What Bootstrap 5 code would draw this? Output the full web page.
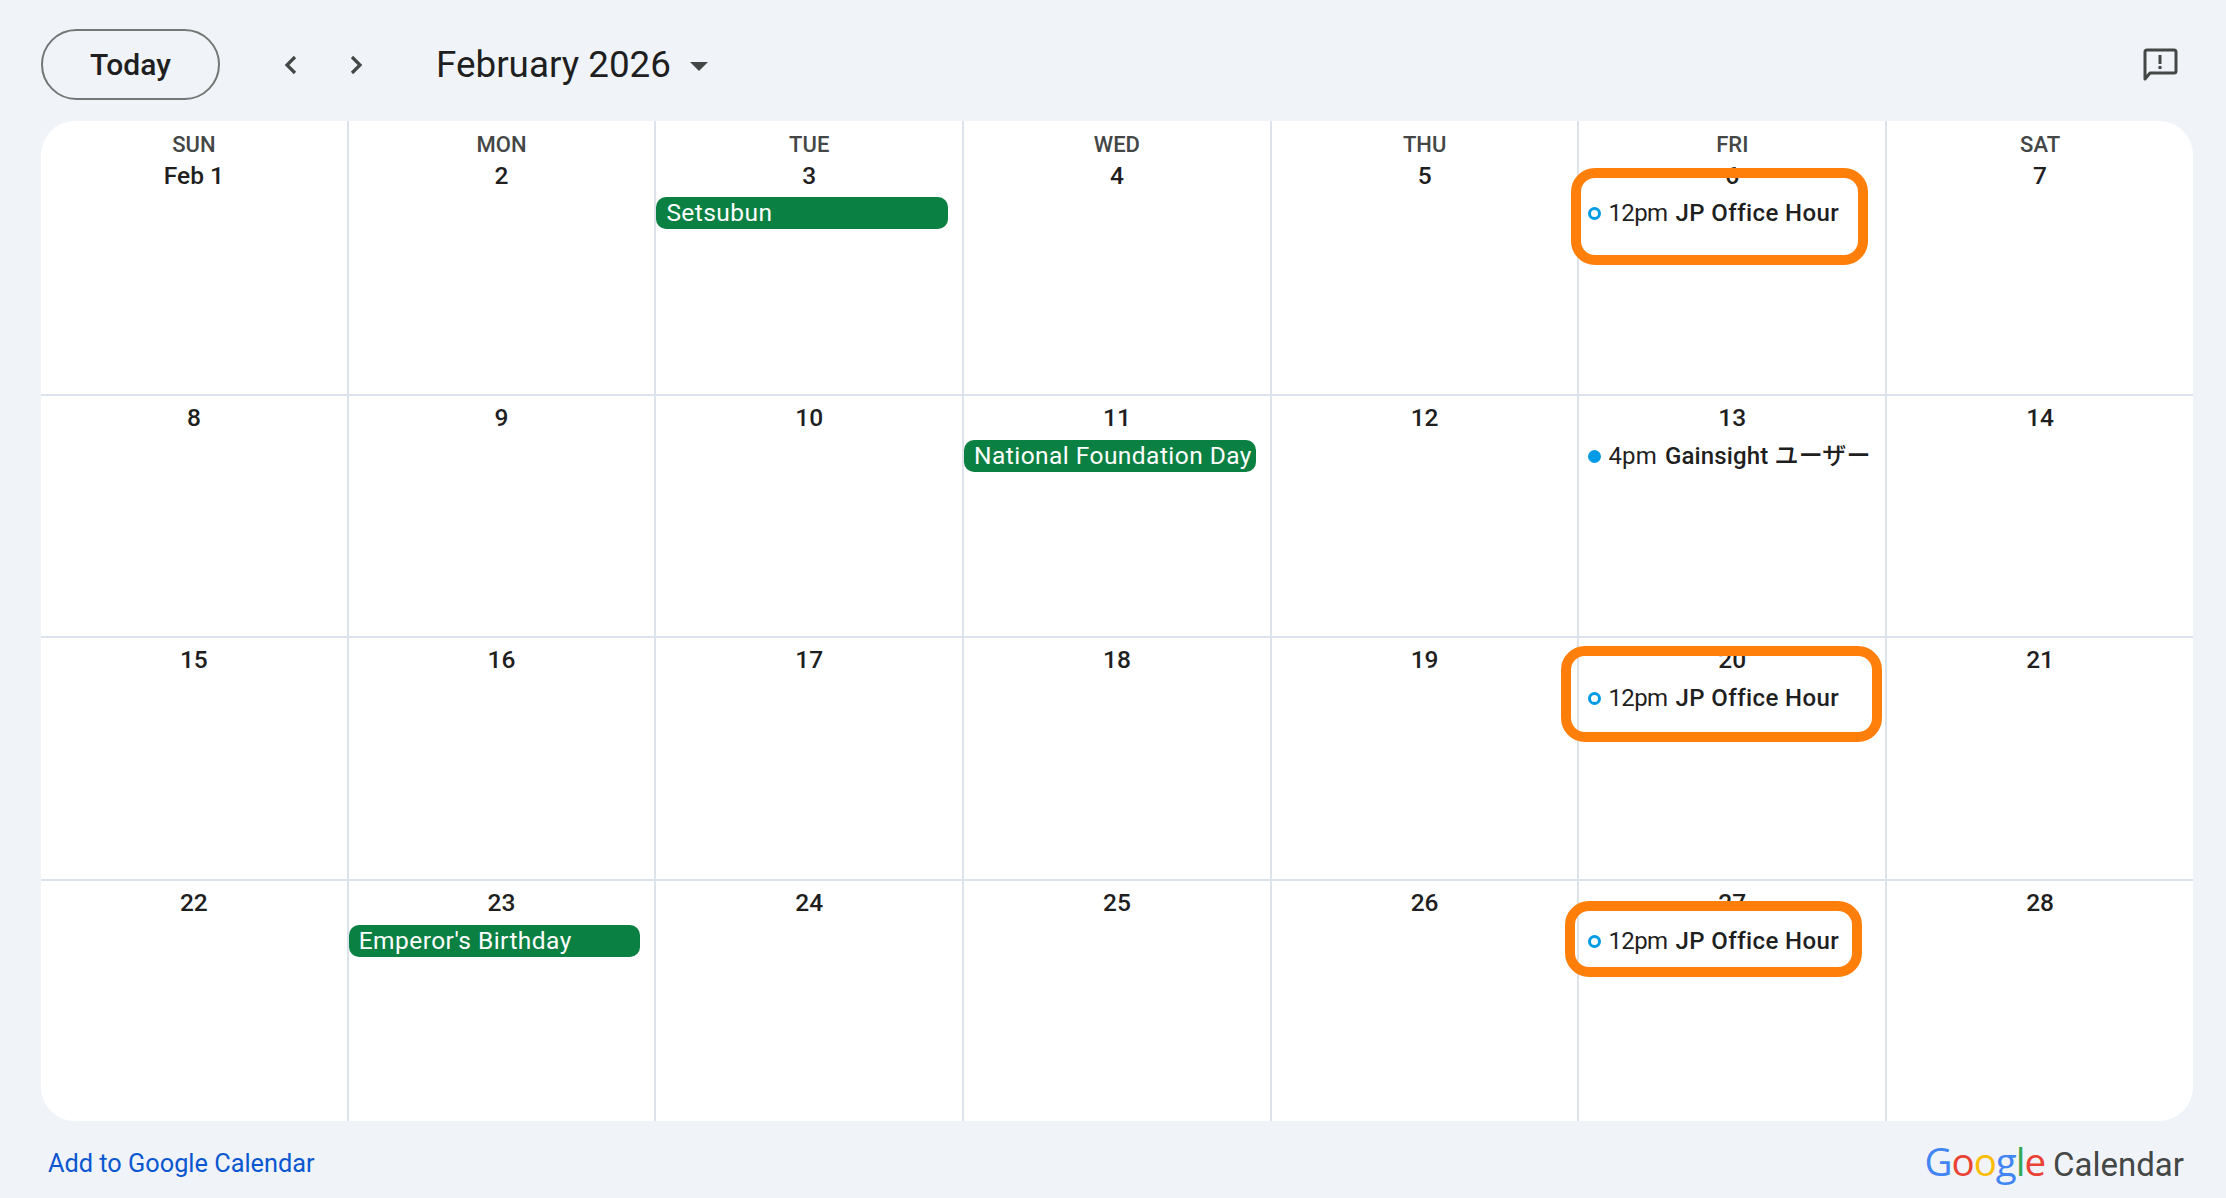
<!DOCTYPE html>
<html lang="en">
<head>
<meta charset="utf-8">
<title>February 2026</title>
<link href="https://cdn.jsdelivr.net/npm/bootstrap@5.3.0/dist/css/bootstrap.min.css" rel="stylesheet">
<style>
html,body{height:100%}
body{background:#f0f4f9;font-family:Roboto,"Noto Sans CJK JP",sans-serif;color:#1f1f1f;overflow:hidden}
.top-bar{height:121px;padding:29px 46px 20px 41px}
.today-btn{width:179px;height:71px;border:2px solid #747775;border-radius:36px;background:transparent;font-size:30px;font-weight:500;color:#1f1f1f;padding:0}
.head-slot{height:71px}
.nav-arrow{width:34px;height:34px;flex:none}
.nav-pair{margin-left:54px;gap:31px}
.month-title{font-size:36.8px;line-height:44px;margin-left:63px;font-weight:400;color:#1f1f1f}
.month-caret{width:0;height:0;border-left:9px solid transparent;border-right:9px solid transparent;border-top:9px solid #444746;margin-left:19px;margin-top:3px}
.feedback-icon{width:40px;height:40px;margin-top:-2px}
.cal-frame{margin:0 33px 0 41px;height:1000px;background:#fff;border-radius:34px;overflow:hidden;display:grid;grid-template-columns:repeat(6,307.7px) 1fr;grid-template-rows:275px 242px 243px 240px}
.day-cell{border-right:2px solid #dde3ea;border-bottom:2px solid #dde3ea;position:relative;text-align:center;padding-top:7px;min-width:0}
.day-cell:nth-child(7n){border-right:0}
.day-cell:nth-last-child(-n+7){border-bottom:0}
.day-name{font-size:22px;line-height:34px;font-weight:500;color:#444746;margin-bottom:-1px}
.day-num{font-size:24.5px;line-height:30px;font-weight:500;color:#1f1f1f}
.all-day{display:block;margin:7px 14px 0 0;height:32px;border-radius:10px;background:#0b8043;color:#fff;font-size:24.5px;line-height:32px;padding-left:10px;text-align:left;white-space:nowrap;overflow:hidden;letter-spacing:.45px}
.timed{height:32px;margin-top:7px;padding-left:9px;font-size:24px;line-height:32px;text-align:left;white-space:nowrap;overflow:hidden;letter-spacing:.15px}
.day-name ~ .all-day,.day-name ~ .timed{margin-top:6px}
.timed b{font-weight:500}
.ev-dot{width:13px;height:13px;border-radius:50%;border:3px solid #039be5;flex:none;margin-right:7px}
.ev-dot.solid{background:#039be5}
.ev-time{margin-right:8px}
.noon{letter-spacing:-.6px}
.office{letter-spacing:.4px}
.callout{position:absolute;border:10px solid #ff7f0a;border-radius:24px;pointer-events:none}
.c-one{left:-8px;top:47px;width:297px;height:97px}
.c-two{left:-18px;top:8px;width:321px;height:96px}
.c-three{left:-14px;top:20px;width:297px;height:76px}
.bottom-bar{margin:0 42px 0 48px;height:77px;padding-top:8px}
.add-link{color:#0b57d0;font-size:25.3px;text-decoration:none}
.logo-word{font-size:38.5px;line-height:44px;font-weight:500;letter-spacing:-1px;margin-top:-5px;font-family:"Open Sans",Roboto,sans-serif}
.logo-cal{font-size:33px;line-height:44px;color:#444746;margin-left:8px;margin-top:2px}
.g-blue{color:#4285f4}.g-red{color:#ea4335}.g-yellow{color:#fbbc05}.g-green{color:#34a853}
</style>
</head>
<body>
<header class="top-bar d-flex align-items-start">
  <button class="today-btn" type="button">Today</button>
  <div class="nav-pair head-slot d-flex align-items-center">
    <svg class="nav-arrow" viewBox="0 0 34 34" fill="none" stroke="#444746" stroke-width="3.2"><path d="M21 9 13 17l8 8"/></svg>
    <svg class="nav-arrow" viewBox="0 0 34 34" fill="none" stroke="#444746" stroke-width="3.2"><path d="M13 9l8 8-8 8"/></svg>
  </div>
  <div class="head-slot d-flex align-items-center">
    <div class="month-title">February 2026</div>
    <div class="month-caret"></div>
  </div>
  <div class="ms-auto head-slot d-flex align-items-center">
    <svg class="feedback-icon" viewBox="0 0 40 40" fill="none"><path d="M5 35V8a2 2 0 0 1 2-2h27a2 2 0 0 1 2 2v19a2 2 0 0 1-2 2H10z" stroke="#444746" stroke-width="3" stroke-linejoin="round"/><path d="M18.5 11h3v9h-3zM18.5 22h3v3h-3z" fill="#444746"/></svg>
  </div>
</header>

<main class="cal-frame">
  <div class="day-cell"><div class="day-name">SUN</div><div class="day-num">Feb 1</div></div>
  <div class="day-cell"><div class="day-name">MON</div><div class="day-num">2</div></div>
  <div class="day-cell"><div class="day-name">TUE</div><div class="day-num">3</div><div class="all-day">Setsubun</div></div>
  <div class="day-cell"><div class="day-name">WED</div><div class="day-num">4</div></div>
  <div class="day-cell"><div class="day-name">THU</div><div class="day-num">5</div></div>
  <div class="day-cell"><div class="day-name">FRI</div><div class="day-num">6</div>
    <div class="timed d-flex align-items-center"><span class="ev-dot"></span><span class="ev-time noon">12pm</span><b class="office">JP Office Hour</b></div>
    <div class="callout c-one"></div></div>
  <div class="day-cell"><div class="day-name">SAT</div><div class="day-num">7</div></div>

  <div class="day-cell"><div class="day-num">8</div></div>
  <div class="day-cell"><div class="day-num">9</div></div>
  <div class="day-cell"><div class="day-num">10</div></div>
  <div class="day-cell"><div class="day-num">11</div><div class="all-day">National Foundation Day</div></div>
  <div class="day-cell"><div class="day-num">12</div></div>
  <div class="day-cell"><div class="day-num">13</div>
    <div class="timed d-flex align-items-center"><span class="ev-dot solid"></span><span class="ev-time">4pm</span><b>Gainsight ユーザー</b></div></div>
  <div class="day-cell"><div class="day-num">14</div></div>

  <div class="day-cell"><div class="day-num">15</div></div>
  <div class="day-cell"><div class="day-num">16</div></div>
  <div class="day-cell"><div class="day-num">17</div></div>
  <div class="day-cell"><div class="day-num">18</div></div>
  <div class="day-cell"><div class="day-num">19</div></div>
  <div class="day-cell"><div class="day-num">20</div>
    <div class="timed d-flex align-items-center"><span class="ev-dot"></span><span class="ev-time noon">12pm</span><b class="office">JP Office Hour</b></div>
    <div class="callout c-two"></div></div>
  <div class="day-cell"><div class="day-num">21</div></div>

  <div class="day-cell"><div class="day-num">22</div></div>
  <div class="day-cell"><div class="day-num">23</div><div class="all-day">Emperor's Birthday</div></div>
  <div class="day-cell"><div class="day-num">24</div></div>
  <div class="day-cell"><div class="day-num">25</div></div>
  <div class="day-cell"><div class="day-num">26</div></div>
  <div class="day-cell"><div class="day-num">27</div>
    <div class="timed d-flex align-items-center"><span class="ev-dot"></span><span class="ev-time noon">12pm</span><b class="office">JP Office Hour</b></div>
    <div class="callout c-three"></div></div>
  <div class="day-cell"><div class="day-num">28</div></div>
</main>

<footer class="bottom-bar d-flex align-items-center justify-content-between">
  <a class="add-link" href="#">Add to Google Calendar</a>
  <div class="d-flex align-items-center">
    <span class="logo-word"><span class="g-blue">G</span><span class="g-red">o</span><span class="g-yellow">o</span><span class="g-blue">g</span><span class="g-green">l</span><span class="g-red">e</span></span>
    <span class="logo-cal">Calendar</span>
  </div>
</footer>
<script src="https://cdn.jsdelivr.net/npm/bootstrap@5.3.0/dist/js/bootstrap.bundle.min.js"></script>
</body>
</html>
